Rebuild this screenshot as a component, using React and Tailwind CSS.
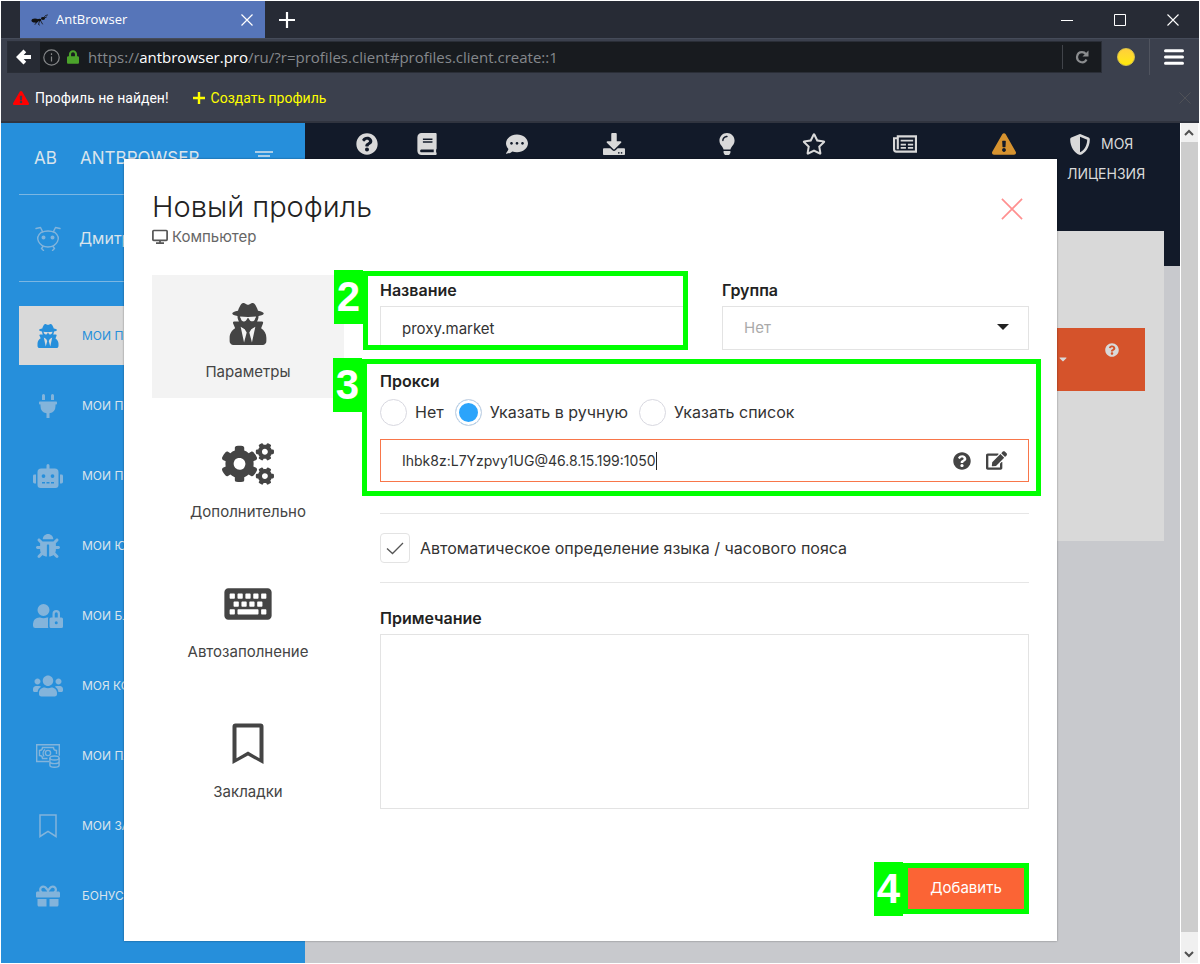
import { useState } from 'react';
import {
  FaBook, FaBug, FaCaretDown, FaCogs, FaCommentDots, FaDownload, FaEdit, FaExclamationTriangle,
  FaGift, FaKeyboard, FaLightbulb, FaLock, FaPlug, FaQuestionCircle, FaRegStar,
  FaRobot, FaShieldAlt, FaUserLock, FaUsers, FaUserSecret,
} from 'react-icons/fa';

const AntLogo = () => (
  <svg className="w-5 h-4" viewBox="0 0 20 16" fill="#111" stroke="#111" strokeLinecap="round">
    <ellipse cx="5" cy="8.500" rx="3.500" ry="2" stroke="none"/>
    <ellipse cx="9.500" cy="8" rx="1.800" ry="1.200" stroke="none"/>
    <ellipse cx="13" cy="6.500" rx="2" ry="1.400" stroke="none"/>
    <path d="M8 9l-3 3.500M9.500 9l-1 3.500 1 .5M10.500 8.500l2 3.500M14 5.500l1.500-2 2-.5M14.500 6l2-1M8 8L5.500 11" fill="none" strokeWidth=".8"/>
  </svg>
);

const BeetleIcon = ({ className }) => (
  <svg className={className} viewBox="0 0 26 26" fill="none" stroke="currentColor" strokeWidth="1.400" strokeLinecap="round" strokeLinejoin="round">
    <path d="M6 7.500C3 10 2 13.500 3.500 16.500S8 22 13 22s8-2.500 9.500-5.500S23 10 20 7.500C15.500 5.500 10.500 5.500 6 7.500z"/>
    <path d="M7.500 6.500L5.500 2.500 1 3.500M18.500 6.500l2-4 4.500 1M8 21.500L6.500 23.500l2 2M18 21.500l1.500 2-2 2"/>
    <circle cx="8.500" cy="12.500" r="1.300" fill="currentColor"/>
    <circle cx="17.500" cy="12.500" r="1.300" fill="currentColor"/>
  </svg>
);

const MoneyIcon = ({ className }) => (
  <svg className={className} viewBox="0 0 24 24" fill="none" stroke="currentColor" strokeWidth="1.400">
    <path d="M13 17.500H.7V.7h22.600v11"/>
    <path d="M11.500 14.500H6.500a3 3 0 00-3-3V6.500a3 3 0 003-3h11a3 3 0 003 3V10"/>
    <circle cx="12" cy="9" r="2.600"/>
    <path d="M8 12.500C6.500 10 7 7 9 5.500"/>
    <ellipse cx="18.500" cy="14" rx="4.600" ry="2"/>
    <path d="M13.900 14v7.200c0 1.200 2 2 4.600 2s4.600-.8 4.600-2V14M13.900 17.600c0 1.200 2 2 4.600 2s4.600-.8 4.600-2"/>
  </svg>
);

const NewsIcon = ({ className }) => (
  <svg className={className} viewBox="0 0 25 22" fill="none" stroke="currentColor" strokeWidth="2.200">
    <path d="M5 3.100h18.900v15.800H3.500C2 18.900 1.100 18 1.100 16.500V5H5zM5 5v11.500"/>
    <path d="M8 7.500h13M8 11.700h5.500M15.500 11.700H21M8 15h5.500M15.500 15H21" strokeWidth="1.900"/>
  </svg>
);

const ThinBookmark = ({ className }) => (
  <svg className={className} viewBox="0 0 24 24" fill="none" stroke="currentColor" strokeWidth="1.500">
    <path d="M4 1h16v21.500l-8-5.200-8 5.200z"/>
  </svg>
);

const Bookmark = ({ className }) => (
  <svg className={className} viewBox="0 0 42 42" fill="currentColor" fillRule="evenodd">
    <path d="M8.500.5h25a3 3 0 013 3V41L21 32.500 5.500 41V3.500a3 3 0 013-3zM9.500 4.500v30.800L21 28.500l11.500 6.800V4.500z"/>
  </svg>
);

const Monitor = () => (
  <svg className="w-4 h-4" viewBox="0 0 16 16" fill="none" stroke="#555" strokeWidth="1.700">
    <rect x=".9" y="1.500" width="14.200" height="9.900" rx=".8"/>
    <path d="M8 11.500v2.500M4 14.200h8"/>
  </svg>
);

const Cross = ({ className, width = 1 }) => (
  <svg className={className} viewBox="0 0 24 24" fill="none" stroke="currentColor" strokeWidth={width}>
    <path d="M1 1l22 22M23 1L1 23"/>
  </svg>
);

const MENU = [
  { icon: FaUserSecret, label: 'МОИ ПРОФИЛИ', active: true },
  { icon: FaPlug, label: 'МОИ ПРОКСИ' },
  { icon: FaRobot, label: 'МОИ ПРОГРАММЫ' },
  { icon: FaBug, label: 'МОИ ЮЗЕРЫ' },
  { icon: FaUserLock, label: 'МОИ БЛОКИРОВКИ' },
  { icon: FaUsers, label: 'МОЯ КОМАНДА' },
  { icon: MoneyIcon, label: 'МОИ ПЛАТЕЖИ' },
  { icon: ThinBookmark, label: 'МОИ ЗАКЛАДКИ' },
  { icon: FaGift, label: 'БОНУСЫ' },
];

const TOP_LINKS = [
  { icon: FaQuestionCircle, title: 'Помощь' },
  { icon: FaBook, title: 'Документация' },
  { icon: FaCommentDots, title: 'Чат' },
  { icon: FaDownload, title: 'Скачать' },
  { icon: FaLightbulb, title: 'Идеи' },
  { icon: FaRegStar, title: 'Отзывы' },
  { icon: NewsIcon, title: 'Новости' },
  { icon: FaExclamationTriangle, title: 'Внимание', warn: true },
];

const TABS = [
  { icon: FaUserSecret, label: 'Параметры' },
  { icon: FaCogs, label: 'Дополнительно' },
  { icon: FaKeyboard, label: 'Автозаполнение' },
  { icon: Bookmark, label: 'Закладки' },
];

const PROXY_MODES = ['Нет', 'Указать в ручную', 'Указать список'];

// Green frame with a step number on its left side
const Step = ({ n, className }) => (
  <div className={`absolute border-5 border-[#00ff00] pointer-events-none ${className}`}>
    <span className="absolute right-[calc(100%+5px)] -top-[6px] w-[29px] h-[54px] bg-[#00ff00] text-white font-['Liberation_Sans'] font-bold text-[42px] leading-[54px] text-center">
      {n}
    </span>
  </div>
);

function BrowserChrome() {
  return (
    <div className="font-['Open_Sans',sans-serif]">
      <div className="flex items-stretch h-[37px] bg-[#272b35] pl-[19px] text-white">
        <div className="flex items-center w-[245px] bg-[#5675b9] pl-[10px] pr-3">
          <AntLogo/>
          <span className="flex-1 ml-[6px] text-[13px]">AntBrowser</span>
          <button aria-label="Закрыть вкладку"><Cross className="w-3 h-3" width={2.4}/></button>
        </div>
        <button aria-label="Новая вкладка" className="ml-[14px]">
          <svg className="w-4 h-4" viewBox="0 0 16 16" stroke="#fff" strokeWidth="2.200"><path d="M8 0v16M0 8h16"/></svg>
        </button>
        <div className="flex items-center gap-[41px] ml-auto pr-5">
          <button aria-label="Свернуть"><svg className="w-3 h-3" viewBox="0 0 12 12" stroke="#fff"><path d="M0 6.500h12"/></svg></button>
          <button aria-label="Развернуть"><svg className="w-3 h-3" viewBox="0 0 12 12" fill="none" stroke="#fff"><path d="M.5.5h11v11H.5z"/></svg></button>
          <button aria-label="Закрыть"><Cross className="w-3 h-3" width={2.2}/></button>
        </div>
      </div>

      <div className="flex items-center h-[37px] bg-[#3b404d] border-t border-[#454b59] pl-[6px]">
        <div className="flex items-center flex-1 h-8 bg-[#181b1f] border border-[#2a2e37]">
          <button aria-label="Назад" className="flex items-center justify-center w-8 h-full bg-[#272b34]">
            <svg className="w-4 h-4" viewBox="0 0 16 16" fill="#fff"><path d="M0 8l7.500-7.500 2.700 2.700L7.700 6H15v4H7.700l2.500 2.800-2.700 2.700z"/></svg>
          </button>
          <svg className="w-[17px] h-[17px] ml-[3px]" viewBox="0 0 17 17" fill="none" stroke="#858789" strokeWidth="1.200">
            <circle cx="8.500" cy="8.500" r="7.700"/><path d="M8.500 7.500v5M8.500 4.300v1.600"/>
          </svg>
          <FaLock className="w-3 h-[14px] ml-[7px] text-[#4ba32b]"/>
          <div className="flex-1 ml-[9px] text-[15px] leading-6 text-[#85888c] whitespace-nowrap">
            https://<span className="text-white">antbrowser.pro</span>/ru/?r=profiles.client#profiles.client.create::1
          </div>
          <button aria-label="Обновить" className="flex items-center border-l border-[#41444a] h-6 pl-3 pr-3">
            <svg className="w-[14px] h-[14px]" viewBox="0 0 14 14" fill="none" stroke="#8b8d8f" strokeWidth="2.200">
              <path d="M11.500 9.500A5 5 0 117 2.200c1.800 0 3 .7 4 2"/><path d="M13.500.5v6h-6z" fill="#8b8d8f" stroke="none"/>
            </svg>
          </button>
        </div>
        <span className="w-[18px] h-[18px] ml-[15px] rounded-full border border-[#d8c34a] bg-linear-to-b from-[#ffcf3a] to-[#ffea00]"/>
        <button aria-label="Меню" className="flex items-center h-9 ml-[14px] pl-[14px] pr-[15px] border-l border-[#50545f]">
          <svg className="w-5 h-4" viewBox="0 0 20 16" stroke="#fff" strokeWidth="3" strokeLinecap="round"><path d="M1.500 1.700h17M1.500 8h17M1.500 14.300h17"/></svg>
        </button>
      </div>

      <div className="flex items-center h-12 bg-[#3b404d] border-b-2 border-[#30343f] px-3 font-['Roboto',sans-serif] text-sm text-white">
        <FaExclamationTriangle className="w-4 h-4 text-[#ff0000]"/>
        <span className="ml-[6px]">Профиль не найден!</span>
        <a href="#create" className="flex items-center ml-6 text-[#ffff00]">
          <svg className="w-3 h-3 mr-[6px]" viewBox="0 0 12 12" stroke="#ff0" strokeWidth="2.400"><path d="M6 0v12M0 6h12"/></svg>
          Создать профиль
        </a>
        <button aria-label="Скрыть" className="ml-auto -mr-1 text-[#4f5157]"><Cross className="w-3 h-3" width={2}/></button>
      </div>
    </div>
  );
}

function Sidebar() {
  return (
    <aside className="w-[304px] shrink-0 bg-[#268fdb] pl-[18px] pb-9 text-[#d9e4ec]">
      <div className="flex items-center h-[72px] pl-[15px] pr-8 border-b border-[#7bb6e2] text-[17px]">
        <span className="w-[46px]">AB</span>
        <span className="flex-1">ANTBROWSER</span>
        <svg className="w-[18px] h-3 -mt-1" viewBox="0 0 18 12" stroke="currentColor" strokeWidth="1.400"><path d="M0 1h18M3 5h12M6 9h6"/></svg>
      </div>
      <div className="flex items-center h-[87px] pl-4 border-b border-[#7bb6e2] text-base">
        <BeetleIcon className="w-[26px] h-[26px] mr-[18px] text-[#83b4db]"/>
        Дмитрий
      </div>
      <nav className="flex flex-col gap-[11px] mt-6 text-xs">
        {MENU.map(({ icon: Icon, label, active }) => (
          <a key={label} href="#menu" className={`flex items-center h-[59px] pl-3 ${active ? 'bg-[#d9d9d9] text-[#268fdb]' : ''}`}>
            <span className="flex justify-center w-[34px] mr-[17px]">
              <Icon className={active ? 'h-6 w-[30px]' : 'h-6 w-[30px] text-[#83b4db]'}/>
            </span>
            {label}
          </a>
        ))}
      </nav>
    </aside>
  );
}

function Page() {
  return (
    <main className="flex-1 min-w-0 bg-[#c8c9cd]">
      <div className="grid grid-cols-[52fr_68fr_112fr_82fr_144fr_30fr_152fr_46fr_153fr] h-[143px] pl-9 bg-[#121a29] text-[#d9d9d9]">
        {TOP_LINKS.map(({ icon: Icon, title, warn }) => (
          <a key={title} href="#top" aria-label={title} className="flex justify-center pt-[10px]">
            <Icon className={warn ? 'w-6 h-[22px] text-[#d7932f]' : 'w-6 h-[22px]'}/>
          </a>
        ))}
        <a href="#license" className="pl-10 pt-[6px] text-sm leading-[30px]">
          <span className="flex items-center"><FaShieldAlt className="w-[22px] h-[21px] ml-[2px] mr-[10px]"/>МОЯ</span>
          ЛИЦЕНЗИЯ
        </a>
      </div>
      <div className="relative flex justify-end -mt-[35px] mr-4 h-[310px] pt-[97px] pr-[19px] bg-[#d9d9d9]">
        <button className="flex gap-9 w-[200px] h-[63px] pt-[15px] pr-[26px] justify-end bg-[#d5532b] text-[#d9d9d9]">
          <FaCaretDown className="w-3 h-3 mt-[10px]"/>
          <FaQuestionCircle className="w-[14px] h-[14px]"/>
        </button>
      </div>
    </main>
  );
}

function Scrollbar() {
  return (
    <div className="flex flex-col w-[19px] shrink-0 bg-[#f0f0f0] border-x border-white">
      <svg className="w-4 h-[19px]" viewBox="0 0 16 19" fill="none" stroke="#505050" strokeWidth="2"><path d="M4 12l4-4 4 4"/></svg>
      <div className="flex-1 bg-[#cdcdcd]"/>
      <svg className="w-4 h-[31px]" viewBox="0 0 16 31" fill="none" stroke="#505050" strokeWidth="2"><path d="M4 20l4 4 4-4"/></svg>
    </div>
  );
}

function ProfileDialog() {
  const [tab, setTab] = useState('Параметры');
  const [name, setName] = useState('proxy.market');
  const [mode, setMode] = useState('Указать в ручную');
  const [proxy, setProxy] = useState('Ihbk8z:L7Yzpvy1UG@46.8.15.199:1050');
  const [auto, setAuto] = useState(true);

  return (
    <div role="dialog" aria-label="Новый профиль" className="w-full max-w-[933px] self-start bg-white px-7 pb-[27px] text-[#333] shadow-[0_0_2px_rgba(0,0,0,0.4)]">
      <div className="flex items-start justify-between h-[116px] pt-8">
        <div>
          <h1 className="text-[29px] leading-8 font-light text-[#222]">Новый профиль</h1>
          <div className="flex items-center gap-1 mt-1 text-[15px] leading-5 text-[#666]"><Monitor/>Компьютер</div>
        </div>
        <button aria-label="Закрыть окно" className="mt-[7px] mr-[6px] text-[#ff9090]"><Cross className="w-[22px] h-[22px]" width={1.8}/></button>
      </div>

      <div className="flex gap-9">
        <div className="flex flex-col gap-[17px] w-48 shrink-0">
          {TABS.map(({ icon: Icon, label }) => (
            <button key={label} onClick={() => setTab(label)}
              className={`flex flex-col items-center h-[123px] pt-7 text-[15px] leading-5 text-[#444] ${tab === label ? 'bg-[#f3f3f3]' : ''}`}>
              <Icon className="w-[52px] h-[42px] mb-[17px]"/>
              {label}
            </button>
          ))}
        </div>

        <form className="flex-1 min-w-0 pt-1" onSubmit={e => e.preventDefault()}>
          <div className="grid grid-cols-2 gap-[35px]">
            <div className="relative">
              <label htmlFor="name" className="block h-[27px] text-base leading-[22px] font-semibold text-[#222]">Название</label>
              <input id="name" value={name} onChange={e => setName(e.target.value)}
                className="block w-full h-11 px-[21px] border border-[#e3e3e3] text-[15px] outline-none"/>
              <Step n={2} className="-left-[17px] -right-px -top-2 bottom-0"/>
            </div>
            <div>
              <label htmlFor="group" className="block h-[27px] text-base leading-[22px] font-semibold text-[#222]">Группа</label>
              <div className="relative">
                <select id="group" className="block w-full h-11 px-[21px] border border-[#e3e3e3] text-[15px] text-[#aaa] appearance-none outline-none">
                  <option>Нет</option>
                </select>
                <svg className="absolute right-5 top-[18px] w-3 h-[6px] pointer-events-none" viewBox="0 0 12 6" fill="#222"><path d="M0 0h12L6 6z"/></svg>
              </div>
            </div>
          </div>

          <div className="relative mt-5">
            <fieldset>
              <legend className="text-base leading-[22px] font-semibold text-[#222]">Прокси</legend>
              <div className="flex items-center gap-[11px] h-10">
                {PROXY_MODES.map(m => (
                  <label key={m} className="flex items-center gap-2 text-base">
                    <input type="radio" name="mode" checked={mode === m} onChange={() => setMode(m)}
                      className="w-[27px] h-[27px] rounded-full border border-[#d8d8e0] bg-white appearance-none checked:bg-[#2ba4fb] checked:shadow-[inset_0_0_0_3px_#fff]"/>
                    {m}
                  </label>
                ))}
              </div>
              <div className="flex items-center h-[43px] mt-[7px] px-[21px] border border-[#f8764a]">
                <input aria-label="Прокси" value={proxy} onChange={e => setProxy(e.target.value)}
                  className="field-sizing-content text-sm outline-none"/>
                <span className="w-px h-[18px] bg-[#222]"/>
                <button type="button" aria-label="Подсказка" className="ml-auto"><FaQuestionCircle className="w-[18px] h-[18px] text-[#444]"/></button>
                <button type="button" aria-label="Изменить" className="ml-[15px]"><FaEdit className="w-[21px] h-[19px] text-[#444]"/></button>
              </div>
            </fieldset>
            <Step n={3} className="-left-[18px] -right-3 -top-[11px] -bottom-[14px]"/>
          </div>

          <div className="flex items-center h-[70px] mt-[31px] border-y border-[#e6e6e6]">
            <label className="flex items-center gap-[10px] text-base">
              <span className="relative">
                <input type="checkbox" checked={auto} onChange={e => setAuto(e.target.checked)}
                  className="block w-[30px] h-[30px] border border-[#e3e3e3] rounded-sm appearance-none"/>
                {auto && (
                  <svg className="absolute inset-0 w-[30px] h-[30px] pointer-events-none" viewBox="0 0 30 30" fill="none" stroke="#555" strokeWidth="1.300"><path d="M7 15.500l5.500 5L23 10"/></svg>
                )}
              </span>
              Автоматическое определение языка / часового пояса
            </label>
          </div>

          <label htmlFor="note" className="block h-[27px] mt-6 text-base leading-[22px] font-semibold text-[#222]">Примечание</label>
          <textarea id="note" className="block w-full h-[175px] px-[21px] py-3 border border-[#e3e3e3] resize-none outline-none"/>

          <div className="flex justify-end mt-[54px]">
            <div className="relative p-[5px]">
              <button className="w-[116px] h-[41px] bg-[#fb6435] text-[15px] text-white">Добавить</button>
              <Step n={4} className="inset-0"/>
            </div>
          </div>
        </form>
      </div>
    </div>
  );
}

export default function App() {
  return (
    <div className="flex flex-col min-h-screen p-px bg-white font-['Inter',sans-serif]">
      <BrowserChrome/>
      <div className="flex flex-1">
        <div className="relative flex flex-1 min-w-0">
          <Sidebar/>
          <Page/>
          <div className="absolute inset-0 flex justify-center pt-9">
            <ProfileDialog/>
          </div>
        </div>
        <Scrollbar/>
      </div>
    </div>
  );
}
